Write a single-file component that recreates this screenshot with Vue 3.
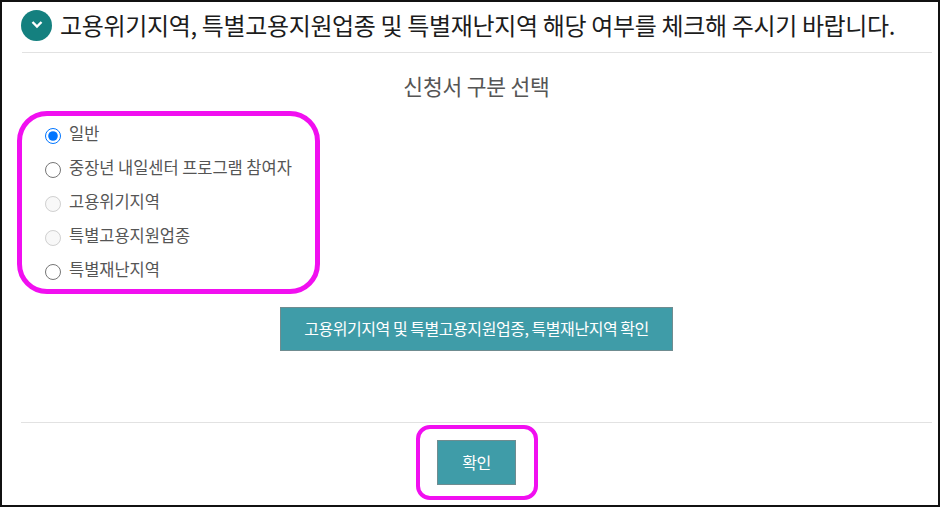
<template>
  <div class="frame">
    <!-- Title -->
    <div class="title-row">
      <span class="title-icon">
        <svg width="14" height="10" viewBox="0 0 14 10">
          <path d="M2.5 2 L7 6.5 L11.5 2" fill="none" stroke="#fff" stroke-width="2.4" />
        </svg>
      </span>
      <h2 class="title">고용위기지역, 특별고용지원업종 및 특별재난지역 해당 여부를 체크해 주시기 바랍니다.</h2>
    </div>

    <h3 class="sub-title">신청서 구분 선택</h3>

    <!-- Radio list -->
    <div class="highlight-list">
      <label v-for="item in options" :key="item.label" class="radio-row">
        <input
          v-model="selected"
          type="radio"
          name="apply-type"
          :value="item.label"
          :disabled="item.disabled"
        />
        <span class="radio-text">{{ item.label }}</span>
      </label>
    </div>

    <div class="check-wrap">
      <button class="teal-button check-button">고용위기지역 및 특별고용지원업종, 특별재난지역 확인</button>
    </div>

    <!-- Footer -->
    <div class="footer">
      <div class="highlight-button">
        <button class="teal-button ok-button">확인</button>
      </div>
    </div>
  </div>
</template>

<script setup>
import { ref } from 'vue'

const selected = ref('일반')
const options = [
  { label: '일반', disabled: false },
  { label: '중장년 내일센터 프로그램 참여자', disabled: false },
  { label: '고용위기지역', disabled: true },
  { label: '특별고용지원업종', disabled: true },
  { label: '특별재난지역', disabled: false }
]
</script>

<style>
html,
body {
  margin: 0;
  background: #fff;
}
</style>

<style scoped>
.frame {
  width: 940px;
  height: 507px;
  box-sizing: border-box;
  border: 2px solid #111;
  padding: 0 6px 0 19px;
  background: #fff;
  font-family: "Noto Sans CJK KR", "Noto Sans", sans-serif;
  overflow: hidden;
}

.title-row {
  height: 46px;
  padding-bottom: 4px;
  display: flex;
  align-items: center;
  gap: 8px;
  border-bottom: 1px solid #e2e2e2;
  margin-left: 1px;
}

.title-icon {
  width: 31px;
  height: 31px;
  margin-left: -1px;
  border-radius: 50%;
  background: #14807f;
  display: flex;
  align-items: center;
  justify-content: center;
  flex-shrink: 0;
}

.title {
  margin: 0 0 2px;
  font-size: 24px;
  font-weight: 400;
  letter-spacing: -0.35px;
  color: #1c1c1c;
  white-space: nowrap;
}

.sub-title {
  margin: 17px 0 0;
  height: 32px;
  line-height: 32px;
  text-align: center;
  font-size: 21.5px;
  font-weight: 400;
  color: #555;
  letter-spacing: -0.2px;
}

.highlight-list {
  width: 303px;
  height: 183px;
  box-sizing: border-box;
  margin: 9px 0 0 -4px;
  padding: 2px 0 0 23px;
  border: 5px solid #f10ff0;
  border-radius: 30px;
}

.radio-row {
  height: 34px;
  display: flex;
  align-items: center;
  gap: 8px;
  font-size: 16.5px;
  color: #555;
  letter-spacing: -0.05px;
}

.radio-row input {
  width: 16px;
  height: 16px;
  margin: 2px 0 0;
  accent-color: #0075ff;
}

.radio-text {
  margin-bottom: 4px;
}

.check-wrap {
  margin-top: 13px;
  display: flex;
  justify-content: center;
}

.teal-button {
  box-sizing: border-box;
  background: #3f9ca8;
  color: #fff;
  border: 1px solid #6f8c90;
  font-family: inherit;
  font-size: 16px;
  letter-spacing: -0.45px;
  padding: 0 0 2px;
}

.check-button {
  width: 393px;
  height: 44px;
}

.footer {
  margin-top: 71px;
  border-top: 1px solid #e2e2e2;
  display: flex;
  justify-content: center;
  padding-top: 2px;
}

.highlight-button {
  width: 122px;
  height: 75px;
  box-sizing: border-box;
  border: 4px solid #f10ff0;
  border-radius: 14px;
  display: flex;
  align-items: center;
  justify-content: center;
}

.ok-button {
  width: 79px;
  height: 45px;
}
</style>
